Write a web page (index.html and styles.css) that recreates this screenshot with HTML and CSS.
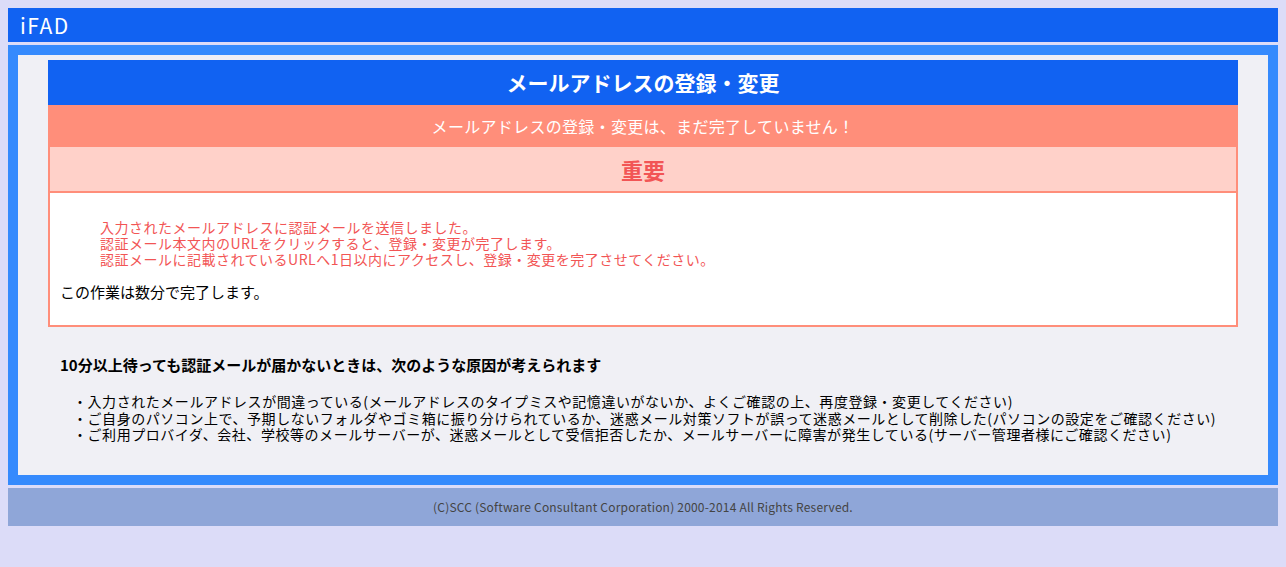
FILE: index.html
```html
<!DOCTYPE html>
<html lang="ja">
<head>
    <meta charset="UTF-8">
    <title>iFAD メールアドレスの登録・変更</title>
    <link rel="stylesheet" href="styles.css">
</head>
<body>
    <div class="header">iFAD</div>

    <div class="main">
        <div class="card">
            <h1 class="card-title">メールアドレスの登録・変更</h1>
            <div class="notice">メールアドレスの登録・変更は、まだ完了していません！</div>
            <div class="card-body">
                <div class="important">重要</div>
                <div class="message">
                    <div class="message-red">
                        入力されたメールアドレスに認証メールを送信しました。<br>
                        認証メール本文内のURLをクリックすると、登録・変更が完了します。<br>
                        認証メールに記載されているURLへ1日以内にアクセスし、登録・変更を完了させてください。
                    </div>
                    <p class="message-note">この作業は数分で完了します。</p>
                </div>
            </div>
        </div>

        <div class="help">
            <h2 class="help-title">10分以上待っても認証メールが届かないときは、次のような原因が考えられます</h2>
            <ul class="help-list">
                <li>・入力されたメールアドレスが間違っている(メールアドレスのタイプミスや記憶違いがないか、よくご確認の上、再度登録・変更してください)</li>
                <li>・ご自身のパソコン上で、予期しないフォルダやゴミ箱に振り分けられているか、迷惑メール対策ソフトが誤って迷惑メールとして削除した(パソコンの設定をご確認ください)</li>
                <li>・ご利用プロバイダ、会社、学校等のメールサーバーが、迷惑メールとして受信拒否したか、メールサーバーに障害が発生している(サーバー管理者様にご確認ください)</li>
            </ul>
        </div>
    </div>

    <div class="footer">(C)SCC (Software Consultant Corporation) 2000-2014 All Rights Reserved.</div>
</body>
</html>
```

FILE: styles.css
```css
body {
    margin: 8px;
    background: #dcdcf8;
    font-family: "Noto Sans CJK JP", "Noto Sans", sans-serif;
    font-size: 14px;
    color: #000;
}

.header {
    height: 34px;
    line-height: 34px;
    padding-left: 12px;
    background: #1162f2;
    color: #fff;
    font-size: 21px;
    letter-spacing: 1.5px;
}

.main {
    margin-top: 3px;
    height: 415px;
    padding: 5px 30px 0;
    border: 10px solid #358afd;
    background: #f0f0f5;
}

.card-title {
    margin: 0;
    height: 45px;
    line-height: 45px;
    text-align: center;
    background: #1162f2;
    color: #fff;
    font-size: 21px;
    font-weight: bold;
}

.notice {
    height: 42px;
    line-height: 42px;
    text-align: center;
    background: #ff8e7a;
    color: #fff;
    font-size: 16px;
    letter-spacing: 0.3px;
}

.card-body {
    border: 2px solid #ff8e7a;
    border-top: none;
}

.important {
    height: 44px;
    line-height: 44px;
    text-align: center;
    background: #ffd1c9;
    color: #f25555;
    font-size: 22px;
    font-weight: bold;
    border-bottom: 2px solid #ff8e7a;
}

.message {
    height: 132px;
    padding: 0 10px;
    background: #fff;
    overflow: hidden;
}

.message-red {
    margin: 26px 0 0 40px;
    line-height: 16px;
    color: #f25555;
    letter-spacing: 0.5px;
}

.message-note {
    margin: 16px 0 0;
    line-height: 17px;
    font-size: 15px;
}

.help {
    padding: 0 12px;
}

.help-title {
    margin: 29px 0 0;
    font-size: 15px;
    font-weight: bold;
    line-height: 18px;
}

.help-list {
    list-style: none;
    margin: 19px 0 0;
    padding-left: 13px;
    line-height: 16.5px;
    letter-spacing: 0.55px;
}

.footer {
    margin-top: 3px;
    height: 38px;
    line-height: 38px;
    text-align: center;
    background: #8fa6d8;
    color: #444;
    font-size: 12px;
    letter-spacing: 0.2px;
}
```
